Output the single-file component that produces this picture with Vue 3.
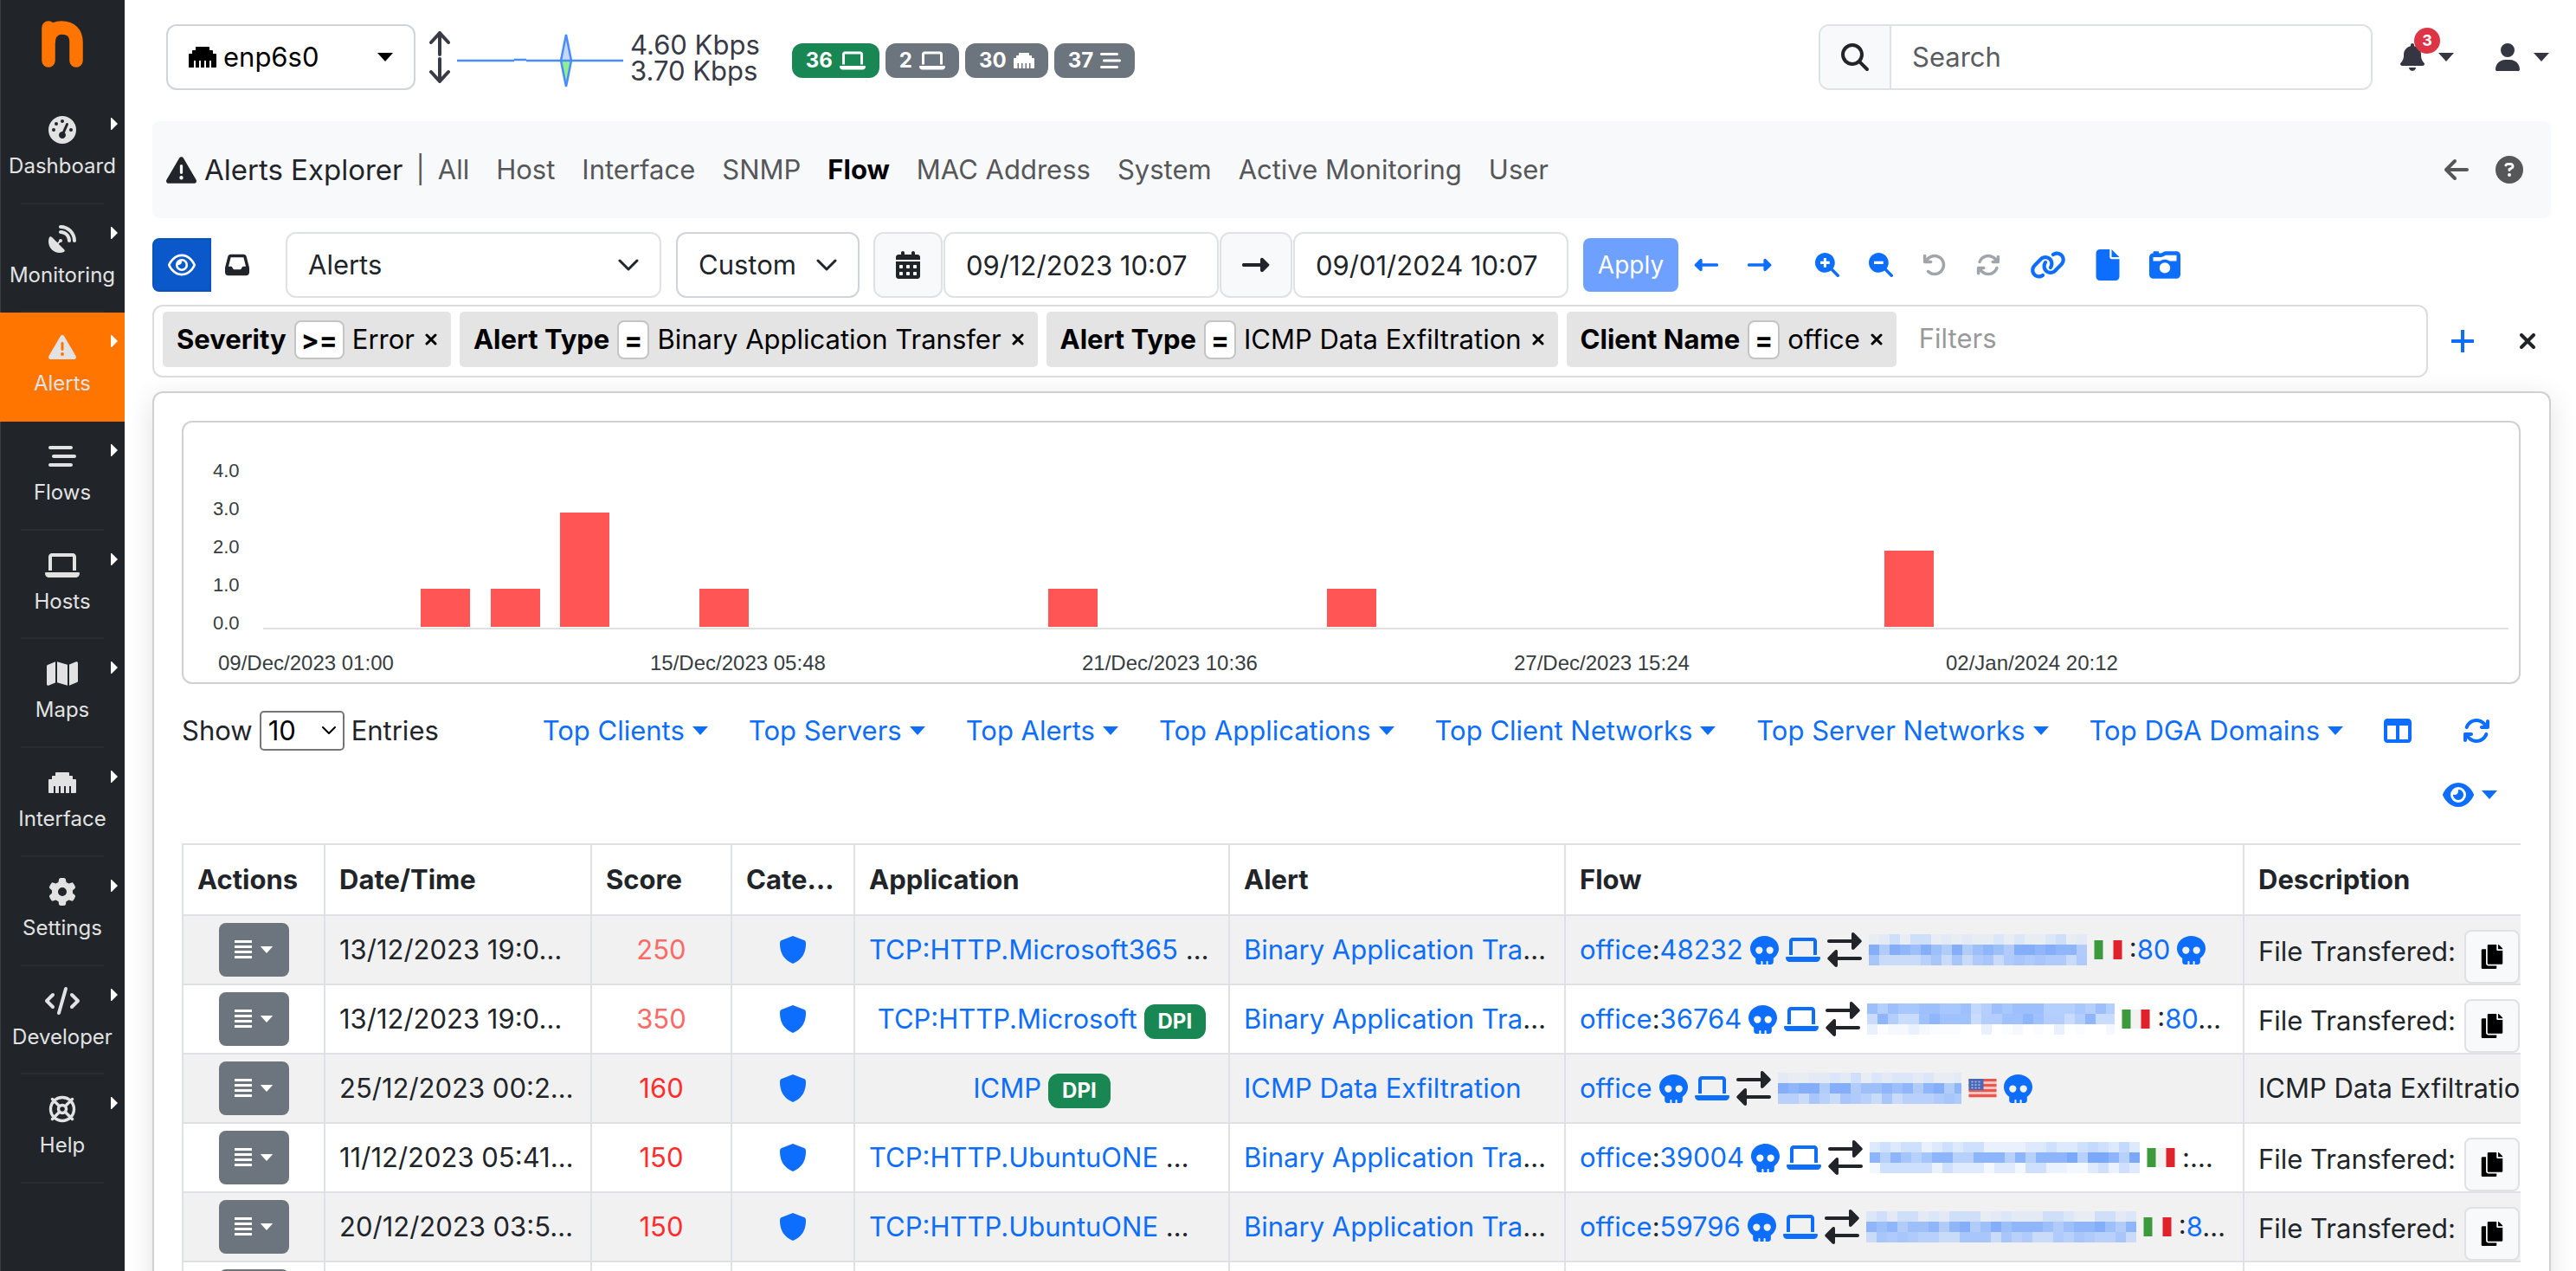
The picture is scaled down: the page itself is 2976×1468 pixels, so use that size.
<script setup>
import { h, ref } from 'vue'

const glyphs = {
  gauge: ['0 0 512 512', 'M0 256a256 256 0 1 1 512 0A256 256 0 1 1 0 256zM288 96a32 32 0 1 0 -64 0 32 32 0 1 0 64 0zM256 416c35.3 0 64-28.7 64-64c0-17.4-6.9-33.1-18.1-44.6L366 161.7c5.3-12.1-.2-26.3-12.3-31.6s-26.3 .2-31.6 12.3L257.9 288c-.6 0-1.3 0-1.9 0c-35.3 0-64 28.7-64 64s28.7 64 64 64zM176 144a32 32 0 1 0 -64 0 32 32 0 1 0 64 0zM96 288a32 32 0 1 0 0-64 32 32 0 1 0 0 64zm352-32a32 32 0 1 0 -64 0 32 32 0 1 0 64 0z'],
  dish: ['0 0 512 512', 'M192 32c0-17.7 14.3-32 32-32C383.1 0 512 128.9 512 288c0 17.7-14.3 32-32 32s-32-14.3-32-32C448 164.3 347.7 64 224 64c-17.7 0-32-14.3-32-32zM60.6 220.6L164.7 324.7l28.4-28.4c-.7-2.6-1.1-5.4-1.1-8.3c0-17.7 14.3-32 32-32s32 14.3 32 32s-14.3 32-32 32c-2.9 0-5.6-.4-8.3-1.1l-28.4 28.4L291.4 451.4c14.5 14.5 11.8 38.8-7.3 46.3C260.5 506.9 234.9 512 208 512C93.1 512 0 418.9 0 304c0-26.9 5.1-52.5 14.4-76.1c7.5-19 31.8-21.8 46.3-7.3zM224 96c106 0 192 86 192 192c0 17.7-14.3 32-32 32s-32-14.3-32-32c0-70.7-57.3-128-128-128c-17.7 0-32-14.3-32-32s14.3-32 32-32z'],
  warning: ['0 0 512 512', 'M256 32c14.2 0 27.3 7.5 34.5 19.8l216 368c7.3 12.4 7.3 27.7 .2 40.1S486.3 480 472 480H40c-14.3 0-27.6-7.7-34.7-20.1s-7-27.8 .2-40.1l216-368C228.7 39.5 241.8 32 256 32zm0 128c-13.3 0-24 10.7-24 24V296c0 13.3 10.7 24 24 24s24-10.7 24-24V184c0-13.3-10.7-24-24-24zm32 224a32 32 0 1 0 -64 0 32 32 0 1 0 64 0z'],
  flows: ['0 0 512 512', 'M0 96C0 78.3 14.3 64 32 64H416c17.7 0 32 14.3 32 32s-14.3 32-32 32H32C14.3 128 0 113.7 0 96zM64 256c0-17.7 14.3-32 32-32H480c17.7 0 32 14.3 32 32s-14.3 32-32 32H96c-17.7 0-32-14.3-32-32zM448 416c0 17.7-14.3 32-32 32H32c-17.7 0-32-14.3-32-32s14.3-32 32-32H416c17.7 0 32 14.3 32 32z'],
  laptop: ['0 0 640 512', 'M128 32C92.7 32 64 60.7 64 96V352h64V96H512V352h64V96c0-35.3-28.7-64-64-64H128zM19.2 384C8.6 384 0 392.6 0 403.2C0 445.6 34.4 480 76.8 480H563.2c42.4 0 76.8-34.4 76.8-76.8c0-10.6-8.6-19.2-19.2-19.2H19.2z'],
  map: ['0 0 576 512', 'M384 476.1L192 421.2V35.9L384 90.8V476.1zm32-1.2V88.4L543.1 37.5c15.8-6.3 32.9 5.3 32.9 22.3V394.6c0 9.8-6 18.6-15.1 22.3L416 474.8zM15.1 95.1L160 37.2V423.6L32.9 474.5C17.1 480.8 0 469.2 0 452.2V117.4c0-9.8 6-18.6 15.1-22.3z'],
  ethernet: ['0 0 512 512', 'M496 192h-48v-48c0-8.8-7.2-16-16-16h-48V80c0-8.8-7.2-16-16-16H144c-8.8 0-16 7.2-16 16v48H80c-8.8 0-16 7.2-16 16v48H16c-8.8 0-16 7.2-16 16v224c0 8.8 7.2 16 16 16h80V320h32v128h64V320h32v128h64V320h32v128h64V320h32v128h80c8.8 0 16-7.2 16-16V208c0-8.8-7.2-16-16-16z'],
  gear: ['0 0 512 512', 'M495.9 166.6c3.2 8.7 .5 18.4-6.4 24.6l-43.3 39.4c1.1 8.3 1.7 16.8 1.7 25.4s-.6 17.1-1.7 25.4l43.3 39.4c6.9 6.2 9.6 15.9 6.4 24.6c-4.4 11.9-9.7 23.3-15.8 34.3l-4.7 8.1c-6.6 11-14 21.4-22.1 31.2c-5.9 7.2-15.7 9.6-24.5 6.8l-55.7-17.7c-13.4 10.3-28.2 18.9-44 25.4l-12.5 57.1c-2 9.1-9 16.3-18.2 17.8c-13.8 2.3-28 3.5-42.5 3.5s-28.7-1.2-42.5-3.5c-9.2-1.5-16.2-8.7-18.2-17.8l-12.5-57.1c-15.8-6.5-30.6-15.1-44-25.4L83.1 425.9c-8.8 2.8-18.6 .3-24.5-6.8c-8.1-9.8-15.5-20.2-22.1-31.2l-4.7-8.1c-6.1-11-11.4-22.4-15.8-34.3c-3.2-8.7-.5-18.4 6.4-24.6l43.3-39.4C64.6 273.1 64 264.6 64 256s.6-17.1 1.7-25.4L22.4 191.2c-6.9-6.2-9.6-15.9-6.4-24.6c4.4-11.9 9.7-23.3 15.8-34.3l4.7-8.1c6.6-11 14-21.4 22.1-31.2c5.9-7.2 15.7-9.6 24.5-6.8l55.7 17.7c13.4-10.3 28.2-18.9 44-25.4l12.5-57.1c2-9.1 9-16.3 18.2-17.8C227.3 1.2 241.5 0 256 0s28.7 1.2 42.5 3.5c9.2 1.5 16.2 8.7 18.2 17.8l12.5 57.1c15.8 6.5 30.6 15.1 44 25.4l55.7-17.7c8.8-2.8 18.6-.3 24.5 6.8c8.1 9.8 15.5 20.2 22.1 31.2l4.7 8.1c6.1 11 11.4 22.4 15.8 34.3zM256 336a80 80 0 1 0 0-160 80 80 0 1 0 0 160z'],
  code: ['0 0 640 512', 'M392.8 1.2c-17-4.9-34.7 5-39.6 22l-128 448c-4.9 17 5 34.7 22 39.6s34.7-5 39.6-22l128-448c4.9-17-5-34.7-22-39.6zm80.6 120.1c-12.5 12.5-12.5 32.8 0 45.3L562.7 256l-89.4 89.4c-12.5 12.5-12.5 32.8 0 45.3s32.8 12.5 45.3 0l112-112c12.5-12.5 12.5-32.8 0-45.3l-112-112c-12.5-12.5-32.8-12.5-45.3 0zm-306.7 0c-12.5-12.5-32.8-12.5-45.3 0l-112 112c-12.5 12.5-12.5 32.8 0 45.3l112 112c12.5 12.5 32.8 12.5 45.3 0s12.5-32.8 0-45.3L77.3 256l89.4-89.4c12.5-12.5 12.5-32.8 0-45.3z'],
  search: ['0 0 512 512', 'M416 208c0 45.9-14.9 88.3-40 122.7L502.6 457.4c12.5 12.5 12.5 32.8 0 45.3s-32.8 12.5-45.3 0L330.7 376c-34.4 25.2-76.8 40-122.7 40C93.1 416 0 322.9 0 208S93.1 0 208 0S416 93.1 416 208zM208 352a144 144 0 1 0 0-288 144 144 0 1 0 0 288z'],
  zoomIn: ['0 0 512 512', 'M416 208c0 45.9-14.9 88.3-40 122.7L506 461c10 10 10 26 0 36l-9 9c-10 10-26 10-36 0L330.7 376c-34.4 25.2-76.8 40-122.7 40C93.1 416 0 322.9 0 208S93.1 0 208 0S416 93.1 416 208zM180 110v70h-70v56h70v70h56v-70h70v-56h-70v-70z'],
  zoomOut: ['0 0 512 512', 'M416 208c0 45.9-14.9 88.3-40 122.7L506 461c10 10 10 26 0 36l-9 9c-10 10-26 10-36 0L330.7 376c-34.4 25.2-76.8 40-122.7 40C93.1 416 0 322.9 0 208S93.1 0 208 0S416 93.1 416 208zM110 180v56h196v-56z'],
  bell: ['0 0 448 512', 'M224 0c-17.7 0-32 14.3-32 32V51.2C119 66 64 130.6 64 208v18.8c0 47-17.3 92.4-48.5 127.6l-7.4 8.3c-8.4 9.4-10.4 22.9-5.3 34.4S19.4 416 32 416H416c12.6 0 24-7.4 29.2-18.9s3.1-25-5.3-34.4l-7.4-8.3C401.3 319.2 384 273.9 384 226.8V208c0-77.4-55-142-128-156.8V32c0-17.7-14.3-32-32-32zm45.3 493.3c12-12 18.7-28.3 18.7-45.3H224 160c0 17 6.7 33.3 18.7 45.3s28.3 18.7 45.3 18.7s33.3-6.7 45.3-18.7z'],
  user: ['0 0 448 512', 'M224 256A128 128 0 1 0 224 0a128 128 0 1 0 0 256zm-45.7 48C79.8 304 0 383.8 0 482.3C0 498.7 13.3 512 29.7 512H418.3c16.4 0 29.7-13.3 29.7-29.7C448 383.8 368.2 304 269.7 304H178.3z'],
  back: ['0 0 448 512', 'M9.4 233.4c-12.5 12.5-12.5 32.8 0 45.3l160 160c12.5 12.5 32.8 12.5 45.3 0s12.5-32.8 0-45.3L109.2 288 416 288c17.7 0 32-14.3 32-32s-14.3-32-32-32l-306.7 0L214.6 118.6c12.5-12.5 12.5-32.8 0-45.3s-32.8-12.5-45.3 0l-160 160z'],
  question: ['0 0 512 512', 'M256 512A256 256 0 1 0 256 0a256 256 0 1 0 0 512zM169.8 165.3c7.9-22.3 29.1-37.3 52.8-37.3h58.3c34.9 0 63.1 28.3 63.1 63.1c0 22.6-12.1 43.5-31.7 54.8L280 264.4c-.2 13-10.9 23.6-24 23.6c-13.3 0-24-10.7-24-24V250.5c0-8.6 4.6-16.5 12.1-20.8l44.3-25.4c4.7-2.7 7.6-7.7 7.6-13.1c0-8.4-6.8-15.1-15.1-15.1H222.6c-3.4 0-6.4 2.1-7.5 5.3l-.4 1.2c-4.4 12.5-18.2 19-30.6 14.6s-19-18.2-14.6-30.6l.4-1.2zM224 352a32 32 0 1 1 64 0 32 32 0 1 1 -64 0z'],
  eye: ['0 0 576 512', 'M288 32c-80.8 0-145.5 36.8-192.6 80.6C48.6 156 17.3 208 2.5 243.7c-3.3 7.9-3.3 16.7 0 24.6C17.3 304 48.6 356 95.4 399.4C142.5 443.2 207.2 480 288 480s145.5-36.8 192.6-80.6c46.8-43.5 78.1-95.4 93-131.1c3.3-7.9 3.3-16.7 0-24.6c-14.9-35.7-46.2-87.7-93-131.1C433.5 68.8 368.8 32 288 32zM144 256a144 144 0 1 1 288 0 144 144 0 1 1 -288 0zm144-64c0 35.3-28.7 64-64 64c-7.1 0-13.9-1.2-20.3-3.3c-5.5-1.8-11.9 1.6-11.7 7.4c.3 6.9 1.3 13.8 3.2 20.7c13.7 51.2 66.4 81.6 117.6 67.9s81.6-66.4 67.9-117.6c-11.1-41.5-47.8-69.4-88.6-71.1c-5.8-.2-9.2 6.1-7.4 11.7c2.1 6.4 3.3 13.2 3.3 20.3z'],
  eyeLine: ['0 0 576 512', 'M288 80c-65.2 0-118.8 29.6-159.9 67.7C89.6 183.5 63 226 49.4 256c13.6 30 40.2 72.5 78.6 108.3C169.2 402.4 222.8 432 288 432s118.8-29.6 159.9-67.7C486.4 328.5 513 286 526.6 256c-13.6-30-40.2-72.5-78.6-108.3C406.8 109.6 353.2 80 288 80zM95.4 112.6C142.5 68.8 207.2 32 288 32s145.5 36.8 192.6 80.6c46.8 43.5 78.1 95.4 93 131.1c3.3 7.9 3.3 16.7 0 24.6c-14.9 35.7-46.2 87.7-93 131.1C433.5 443.2 368.8 480 288 480s-145.5-36.8-192.6-80.6C48.6 356 17.3 304 2.5 268.3c-3.3-7.9-3.3-16.7 0-24.6C17.3 208 48.6 156 95.4 112.6zM288 336c44.2 0 80-35.8 80-80s-35.8-80-80-80c-.7 0-1.3 0-2 0c1.3 5.1 2 10.5 2 16c0 35.3-28.7 64-64 64c-5.5 0-10.9-.7-16-2c0 .7 0 1.3 0 2c0 44.2 35.8 80 80 80zm0-208a128 128 0 1 1 0 256 128 128 0 1 1 0-256z'],
  inbox: ['0 0 512 512', 'M121 32C91.6 32 66 52 58.9 80.5L1.9 308.4C.6 313.5 0 318.7 0 323.9V416c0 35.3 28.7 64 64 64H448c35.3 0 64-28.7 64-64V323.9c0-5.2-.6-10.4-1.9-15.5l-57-227.9C446 52 420.4 32 391 32H121zm0 64H391l48 192H387.8c-12.1 0-23.2 6.8-28.6 17.7l-14.3 28.6c-5.4 10.8-16.5 17.7-28.6 17.7H195.8c-12.1 0-23.2-6.8-28.6-17.7l-14.3-28.6c-5.4-10.8-16.5-17.7-28.6-17.7H73L121 96z'],
  calendar: ['0 0 448 512', 'M128 0c17.7 0 32 14.3 32 32V64H288V32c0-17.7 14.3-32 32-32s32 14.3 32 32V64h48c26.5 0 48 21.5 48 48v48H0V112C0 85.5 21.5 64 48 64H96V32c0-17.7 14.3-32 32-32zM0 192H448V464c0 26.5-21.5 48-48 48H48c-26.5 0-48-21.5-48-48V192zm64 80v32c0 8.8 7.2 16 16 16h32c8.8 0 16-7.2 16-16V272c0-8.8-7.2-16-16-16H80c-8.8 0-16 7.2-16 16zm128 0v32c0 8.8 7.2 16 16 16h32c8.8 0 16-7.2 16-16V272c0-8.8-7.2-16-16-16H208c-8.8 0-16 7.2-16 16zm144-16c-8.8 0-16 7.2-16 16v32c0 8.8 7.2 16 16 16h32c8.8 0 16-7.2 16-16V272c0-8.8-7.2-16-16-16H336zM64 400v32c0 8.8 7.2 16 16 16h32c8.8 0 16-7.2 16-16V400c0-8.8-7.2-16-16-16H80c-8.8 0-16 7.2-16 16zm144-16c-8.8 0-16 7.2-16 16v32c0 8.8 7.2 16 16 16h32c8.8 0 16-7.2 16-16V400c0-8.8-7.2-16-16-16H208zm112 16v32c0 8.8 7.2 16 16 16h32c8.8 0 16-7.2 16-16V400c0-8.8-7.2-16-16-16H336c-8.8 0-16 7.2-16 16z'],
  longRight: ['0 0 32 16', 'M2 6H21V2C21 0 23 -1 24.500 .5L31 7C31.600 7.600 31.600 8.400 31 9L24.500 15.500C23 17 21 16 21 14V10H2C.7 10 0 9.300 0 8.500V7.500C0 6.700 .7 6 2 6Z'],
  longLeft: ['0 0 32 16', 'M30 6H11V2C11 0 9 -1 7.500 .5L1 7C.4 7.600 .4 8.400 1 9L7.500 15.500C9 17 11 16 11 14V10H30C31.300 10 32 9.300 32 8.500V7.500C32 6.700 31.300 6 30 6Z'],
  undo: ['0 0 512 512', 'M125.7 160H176c17.7 0 32 14.3 32 32s-14.3 32-32 32H48c-17.7 0-32-14.3-32-32V64c0-17.7 14.3-32 32-32s32 14.3 32 32v51.2L97.6 97.6c87.5-87.5 229.3-87.5 316.8 0s87.5 229.3 0 316.8s-229.3 87.5-316.8 0c-12.5-12.5-12.5-32.8 0-45.3s32.8-12.5 45.3 0c62.5 62.5 163.8 62.5 226.3 0s62.5-163.8 0-226.3s-163.8-62.5-226.3 0L125.7 160z'],
  refresh: ['0 0 512 512', 'M105.1 202.6c7.7-21.8 20.2-42.3 37.8-59.8c62.5-62.5 163.8-62.5 226.3 0L386.3 160H352c-17.7 0-32 14.3-32 32s14.3 32 32 32H463.5c0 0 0 0 0 0h.4c17.7 0 32-14.3 32-32V80c0-17.7-14.3-32-32-32s-32 14.3-32 32v35.2L414.4 97.6c-87.5-87.5-229.3-87.5-316.8 0C73.2 122 55.6 150.7 44.8 181.4c-5.9 16.7 2.9 34.9 19.5 40.8s34.9-2.9 40.8-19.5zM39 289.3c-5 1.500-9.8 4.200-13.7 8.200c-4 4-6.7 8.800-8.100 14c-.3 1.200-.6 2.500-.8 3.800c-.3 1.700-.4 3.400-.4 5.100V432c0 17.700 14.300 32 32 32s32-14.300 32-32V396.900l17.600 17.500 0 0c87.500 87.400 229.300 87.400 316.700 0c24.400-24.400 42.100-53.100 52.900-83.700c5.900-16.700-2.900-34.900-19.500-40.800s-34.900 2.900-40.800 19.500c-7.700 21.800-20.200 42.300-37.800 59.800c-62.500 62.500-163.800 62.500-226.300 0l-.1-.1L125.600 352H160c17.700 0 32-14.300 32-32s-14.300-32-32-32H48.400c-1.600 0-3.200 .1-4.800 .3s-3.100 .5-4.600 1z'],
  link: ['0 0 640 512', 'M579.8 267.7c56.5-56.5 56.5-148 0-204.5c-50-50-128.8-56.5-186.3-15.4l-1.6 1.1c-14.4 10.3-17.7 30.3-7.4 44.6s30.3 17.7 44.6 7.4l1.6-1.1c32.1-22.9 76-19.3 103.8 8.6c31.5 31.5 31.5 82.5 0 114L422.3 334.8c-31.5 31.5-82.5 31.5-114 0c-27.9-27.9-31.5-71.8-8.6-103.8l1.1-1.6c10.3-14.4 6.9-34.4-7.4-44.6s-34.4-6.9-44.6 7.4l-1.1 1.6C206.5 251.2 213 330 263 380c56.5 56.5 148 56.5 204.5 0L579.8 267.7zM60.2 244.3c-56.5 56.5-56.5 148 0 204.5c50 50 128.8 56.5 186.3 15.4l1.6-1.1c14.4-10.3 17.7-30.3 7.4-44.6s-30.3-17.7-44.6-7.4l-1.6 1.1c-32.1 22.9-76 19.3-103.8-8.6C74 372 74 321 105.5 289.5L217.7 177.2c31.5-31.5 82.5-31.5 114 0c27.9 27.9 31.5 71.8 8.6 103.9l-1.1 1.6c-10.3 14.4-6.9 34.4 7.4 44.6s34.4 6.9 44.6-7.4l1.1-1.6C433.5 260.8 427 182 377 132c-56.5-56.5-148-56.5-204.5 0L60.2 244.3z'],
  file: ['0 0 384 512', 'M0 64C0 28.7 28.7 0 64 0H224V128c0 17.7 14.3 32 32 32H384V448c0 35.3-28.7 64-64 64H64c-35.3 0-64-28.7-64-64V64zm384 64H256V0L384 128z'],
  camera: ['0 0 512 512', 'M220.6 121.2L271.1 96 448 96v96H333.2c-21.9-15.1-48.5-24-77.2-24s-55.2 8.9-77.2 24H64V128H192c9.900 0 19.700-2.300 28.600-6.800zM0 128V416c0 35.300 28.700 64 64 64H448c35.300 0 64-28.700 64-64V96c0-35.300-28.700-64-64-64H271.100c-9.900 0-19.700 2.300-28.600 6.800L192 64H160V48c0-8.800-7.200-16-16-16H80c-8.800 0-16 7.200-16 16l0 16C28.700 64 0 92.700 0 128zM344 304a88 88 0 1 1 -176 0 88 88 0 1 1 176 0z'],
  columns: ['0 0 512 512', 'M0 96C0 60.7 28.7 32 64 32H448c35.3 0 64 28.7 64 64V416c0 35.3-28.7 64-64 64H64c-35.3 0-64-28.7-64-64V96zm64 64V416H224V160H64zm384 0H288V416H448V160z'],
  skull: ['0 0 512 512', 'M416 398.9c58.5-41.1 96-104.1 96-174.9C512 100.3 397.4 0 256 0S0 100.3 0 224c0 70.7 37.5 133.8 96 174.9c0 .4 0 .7 0 1.1v64c0 26.5 21.5 48 48 48h48V464c0-8.8 7.2-16 16-16s16 7.2 16 16v48h64V464c0-8.8 7.2-16 16-16s16 7.2 16 16v48h48c26.5 0 48-21.5 48-48V400c0-.4 0-.7 0-1.1zM96 256a64 64 0 1 1 128 0A64 64 0 1 1 96 256zm256-64a64 64 0 1 1 0 128 64 64 0 1 1 0-128z'],
  exchange: ['0 0 40 40', 'M2 8H28V2C28 0 30 -.5 31.300 .8L39.200 8.700C40 9.500 40 10.500 39.200 11.300L31.300 19.200C30 20.500 28 20 28 18V12H2C.8 12 0 11.200 0 10S.8 8 2 8ZM38 28H12V22C12 20 10 19.500 8.700 20.800L.8 28.700C0 29.500 0 30.500 .8 31.300L8.700 39.200C10 40.500 12 40 12 38V32H38C39.200 32 40 31.200 40 30S39.200 28 38 28Z'],
  shield: ['0 0 30 32', 'M15 0L28 5C29.500 5.600 30 7 30 9C30 20 25 28 15 32C5 28 0 20 0 9C0 7 .5 5.600 2 5Z'],
  copy: ['0 0 448 512', 'M320 448v40c0 13.255-10.745 24-24 24H24c-13.255 0-24-10.745-24-24V120c0-13.255 10.745-24 24-24h72v296c0 30.879 25.121 56 56 56h168zm0-344V0H152c-13.255 0-24 10.745-24 24v368c0 13.255 10.745 24 24 24h272c13.255 0 24-10.745 24-24V128H344c-13.200 0-24-10.800-24-24zm120.971-31.029L375.029 7.029A24 24 0 0 0 358.059 0H352v96h96v-6.059a24 24 0 0 0-7.029-16.970z'],
  lines: ['0 0 22 22', 'M1 0H21V3H1ZM1 6H21V9H1ZM1 12H21V15H1ZM1 18H21V21H1Z'],
  caret: ['0 0 18 10', 'M0 0H18L9 10Z'],
  play: ['0 0 8 14', 'M0 0L1 0L8 7L1 14H0Z']
}
const strokes = {
  ring: ['0 0 32 32', 'M16 2.500a13.500 13.500 0 1 1 0 27a13.500 13.500 0 1 1 0-27zM16 11.500a4.500 4.500 0 1 1 0 9a4.500 4.500 0 1 1 0-9zM4.500 4.500L12 12M27.500 4.500L20 12M4.500 27.500L12 20M27.500 27.500L20 20', 3.4],
  chevron: ['0 0 24 14', 'M2 2L12 12L22 2', 3],
  thinChevron: ['0 0 16 10', 'M1 1L8 8L15 1', 2],
  updown: ['0 0 26 60', 'M13 2V27M3 13L13 2L23 13M13 32V58M3 47L13 58L23 47', 4],
  plus: ['0 0 26 26', 'M13 1V25M1 13H25', 4],
  times: ['0 0 18 18', 'M2 2L16 16M16 2L2 16', 4],
  cross: ['0 0 14 14', 'M2 2L12 12M12 2L2 12', 3]
}
const Icon = ({ name }) => {
  const line = strokes[name]
  const [viewBox, d, w] = line || glyphs[name]
  return h('svg', { viewBox, 'aria-hidden': 'true' }, [
    h('path', line
      ? { d, fill: 'none', stroke: 'currentColor', 'stroke-width': w, 'stroke-linecap': 'round', 'stroke-linejoin': 'round' }
      : { d, fill: 'currentColor', 'fill-rule': 'evenodd' })
  ])
}
Icon.props = ['name']

const menu = [
  ['Dashboard', 'gauge'], ['Monitoring', 'dish'], ['Alerts', 'warning'], ['Flows', 'flows'], ['Hosts', 'laptop'],
  ['Maps', 'map'], ['Interface', 'ethernet'], ['Settings', 'gear'], ['Developer', 'code'], ['Help', 'ring']
]
const counters = [['36', 'laptop', true], ['2', 'laptop'], ['30', 'ethernet'], ['37', 'flows']]
const tabs = ['All', 'Host', 'Interface', 'SNMP', 'Flow', 'MAC Address', 'System', 'Active Monitoring', 'User']
const filters = [
  ['Severity', '>=', 'Error'],
  ['Alert Type', '=', 'Binary Application Transfer'],
  ['Alert Type', '=', 'ICMP Data Exfiltration'],
  ['Client Name', '=', 'office']
]
const tops = ['Top Clients', 'Top Servers', 'Top Alerts', 'Top Applications', 'Top Client Networks', 'Top Server Networks', 'Top DGA Domains']

const from = ref('09/12/2023 10:07')
const to = ref('09/01/2024 10:07')

const ticks = [0, 1, 2, 3, 4]
const dates = ['09/Dec/2023 01:00', '15/Dec/2023 05:48', '21/Dec/2023 10:36', '27/Dec/2023 15:24', '02/Jan/2024 20:12']
const bars = [[0, 1], [1, 1], [2, 3], [4, 1], [9, 1], [13, 1], [21, 2]].map(([slot, n]) => ({
  x: Math.round(274 + slot * 80.5), height: n * 44
}))

const tints = {
  mid: [['#e3eaf5', '#dbe6f8', '#cfdff9', '#e8edf4'], ['#8fb6fb', '#9dbffa', '#84aefa', '#b2ccfa'], ['#b9d0fa', '#a9c6fa', '#c9dbf9', '#b0cbfb']],
  low: [['#b4cffd', '#a8c8fd', '#c3d8fe', '#9dc0fd'], ['#9fc2fe', '#b3cefe', '#8fb6fb', '#c9dcfe'], ['#f5f9ff', '#ffffff', '#e9f1ff', '#fafcff']],
  wide: [['#dce9fe', '#c4d9fe', '#e9f1ff', '#cfe0fe'], ['#8cb5fd', '#7aa9fc', '#a5c5fd', '#b7d1fe'], ['#dfeafe', '#ebf2ff', '#cfe0fe', '#f3f8ff']]
}
const mosaic = (width, kind, seed) => {
  const cells = []
  let s = seed
  tints[kind].forEach((row, r) => {
    for (let x = 0; x < width; x += 12) {
      s = (s * 1103 + 12345) % 65537
      cells.push({ x, y: r * 12, w: Math.min(12, width - x), fill: row[s % 4] })
    }
  })
  return cells
}
const rows = [
  { time: '13/12/2023 19:0…', score: 250, soft: true, app: 'TCP:HTTP.Microsoft365', cut: true, alert: 'Binary Application Tra', port: '48232', w: 252, kind: 'mid', flag: 'it', dest: '80', tail: '', endSkull: true },
  { time: '13/12/2023 19:0…', score: 350, soft: true, app: 'TCP:HTTP.Microsoft', dpi: true, alert: 'Binary Application Tra', port: '36764', w: 286, kind: 'low', flag: 'it', dest: '80', tail: '…' },
  { time: '25/12/2023 00:2…', score: 160, app: 'ICMP', dpi: true, alert: 'ICMP Data Exfiltration', w: 212, kind: 'mid', flag: 'us', endSkull: true, desc: 'ICMP Data Exfiltration' },
  { time: '11/12/2023 05:41…', score: 150, app: 'TCP:HTTP.UbuntuONE', cut: true, alert: 'Binary Application Tra', port: '39004', w: 312, kind: 'wide', flag: 'it', dest: '', tail: '…' },
  { time: '20/12/2023 03:5…', score: 150, app: 'TCP:HTTP.UbuntuONE', cut: true, alert: 'Binary Application Tra', port: '59796', w: 312, kind: 'mid', flag: 'it', dest: '8', tail: '…' },
  { time: '20/12/2023 03:5…', score: 150, app: 'TCP:HTTP.UbuntuONE', cut: true, alert: 'Binary Application Tra', port: '59798', w: 312, kind: 'wide', flag: 'it', dest: '8', tail: '…' }
].map((r, i) => ({ ...r, cells: mosaic(r.w, r.kind, 77 + i * 31) }))
</script>

<template>
  <div class="app">
    <nav class="side" aria-label="Main">
      <a href="#" class="logo" aria-label="Home">
        <svg viewBox="0 0 48 54"><path d="M8 46V8M8 27C8 14 14 8 23 8C34 8 40 14 40 25V46" fill="none" stroke="#ff7500" stroke-width="15.5" stroke-linecap="round" /></svg>
      </a>
      <ul class="menu">
        <li v-for="[label, icon] in menu" :key="label">
          <a href="#" :class="['item', { active: label === 'Alerts' }]">
            <Icon :name="icon" class="item-icon" />
            <span>{{ label }}</span>
            <Icon name="play" class="item-arrow" />
          </a>
        </li>
      </ul>
    </nav>

    <main class="main">
      <header class="top">
        <div class="field iface">
          <Icon name="ethernet" class="i32" />
          <select aria-label="Interface"><option>enp6s0</option></select>
          <Icon name="caret" class="caret" />
        </div>
        <Icon name="updown" class="updown" />
        <div class="status">
          <svg class="spark" viewBox="0 0 192 64">
            <path d="M120 33L126 2L132 33Z" fill="#c6d9fd" />
            <path d="M120 33L126 62L132 33Z" fill="#90ee90" />
            <path d="M0 32H66M66 31H80M80 32H192M120 32L126 2L132 32L126 62Z" fill="none" stroke="#4a8cff" stroke-width="2.500" />
          </svg>
          <div class="rates"><span>4.60 Kbps</span><span>3.70 Kbps</span></div>
          <div class="counters">
            <a v-for="([n, icon, on]) in counters" :key="n" href="#" :class="['pill', { green: on }]">{{ n }}<Icon :name="icon" class="pill-icon" /></a>
          </div>
        </div>
        <form class="search" @submit.prevent>
          <button type="submit" aria-label="Search"><Icon name="search" class="i32" /></button>
          <input type="search" placeholder="Search" aria-label="Search">
        </form>
        <button class="plain bell" aria-label="Notifications">
          <Icon name="bell" class="i28" /><Icon name="caret" class="caret" /><span class="count">3</span>
        </button>
        <button class="plain user" aria-label="User"><Icon name="user" class="i28" /><Icon name="caret" class="caret" /></button>
      </header>

      <div class="crumbs">
        <Icon name="warning" class="crumb-icon" />
        <h1>Alerts Explorer</h1>
        <span class="bar">|</span>
        <a v-for="t in tabs" :key="t" href="#" :class="{ current: t === 'Flow' }">{{ t }}</a>
        <button class="plain go-back" aria-label="Back"><Icon name="back" class="i28" /></button>
        <button class="plain" aria-label="Help"><Icon name="question" class="i32" /></button>
      </div>

      <div class="tools">
        <button class="look" aria-label="Active alerts"><Icon name="eyeLine" class="i32" /></button>
        <button class="plain boxed" aria-label="Inbox"><Icon name="inbox" class="i28" /></button>
        <div class="field kind">
          <select aria-label="Query"><option>Alerts</option></select>
          <Icon name="chevron" class="chev" />
        </div>
        <div class="field range">
          <select aria-label="Range"><option>Custom</option></select>
          <Icon name="chevron" class="chev" />
        </div>
        <div class="dates">
          <span class="field addon"><Icon name="calendar" class="i28" /></span>
          <input v-model="from" class="field" type="text" aria-label="From">
          <span class="field addon"><Icon name="longRight" class="i32" /></span>
          <input v-model="to" class="field" type="text" aria-label="To">
        </div>
        <button class="apply">Apply</button>
        <div class="acts">
          <button class="plain" aria-label="Previous"><Icon name="longLeft" class="i28" /></button>
          <button class="plain" aria-label="Next"><Icon name="longRight" class="i28" /></button>
          <button class="plain first" aria-label="Zoom in"><Icon name="zoomIn" class="i28" /></button>
          <button class="plain" aria-label="Zoom out"><Icon name="zoomOut" class="i28" /></button>
          <button class="plain off" aria-label="Undo"><Icon name="undo" class="i28" /></button>
          <button class="plain off" aria-label="Reload"><Icon name="refresh" class="i28" /></button>
          <button class="plain" aria-label="Copy link"><Icon name="link" class="i42" /></button>
          <button class="plain" aria-label="Download"><Icon name="file" class="file" /></button>
          <button class="plain" aria-label="Snapshot"><Icon name="camera" class="i36" /></button>
        </div>
      </div>

      <div class="filters">
        <div class="tags">
          <span v-for="([k, op, v], i) in filters" :key="i" class="tag">
            <b>{{ k }}</b><b class="op">{{ op }}</b><span>{{ v }}</span>
            <button class="plain drop" :aria-label="'Remove ' + k"><Icon name="cross" class="cross" /></button>
          </span>
          <input type="text" placeholder="Filters" aria-label="Filters">
        </div>
        <button class="plain add" aria-label="Add filter"><Icon name="plus" class="plus" /></button>
        <button class="plain" aria-label="Clear filters"><Icon name="times" class="times" /></button>
      </div>

      <section class="card">
        <div class="chart">
          <svg viewBox="0 0 2698 300" role="img" aria-label="Alerts over time">
            <text v-for="t in ticks" :key="t" x="34" :y="239 - t * 44" font-size="22">{{ t }}.0</text>
            <rect x="92" y="237" width="2594" height="2" fill="#e0e0e0" />
            <rect v-for="b in bars" :key="b.x" :x="b.x" :y="236 - b.height" width="57" :height="b.height" fill="#ff5555" />
            <text v-for="(d, i) in dates" :key="d" :x="40 + i * 499" y="286" font-size="24">{{ d }}</text>
          </svg>
        </div>

        <div class="controls">
          <label class="show">Show
            <span class="entries"><select><option>10</option></select><Icon name="thinChevron" class="thin" /></span>
            Entries</label>
          <div class="tops">
            <button v-for="t in tops" :key="t" class="plain top-link">{{ t }}<Icon name="caret" class="caret" /></button>
            <button class="plain" aria-label="Columns"><Icon name="columns" class="i32" /></button>
            <button class="plain reload" aria-label="Refresh"><Icon name="refresh" class="i32" /></button>
          </div>
          <div class="second">
            <button class="plain top-link" aria-label="Visibility"><Icon name="eye" class="i36" /><Icon name="caret" class="caret" /></button>
          </div>
        </div>

        <div class="scroll">
          <table>
            <colgroup>
              <col class="c1"><col class="c2"><col class="c3"><col class="c4"><col class="c5"><col class="c6"><col class="c7"><col>
            </colgroup>
            <thead>
              <tr><th>Actions</th><th>Date/Time</th><th>Score</th><th>Cate…</th><th>Application</th><th>Alert</th><th>Flow</th><th>Description</th></tr>
            </thead>
            <tbody>
              <tr v-for="(r, i) in rows" :key="i">
                <td class="mid"><button class="act" aria-label="Actions"><Icon name="lines" class="lines" /><Icon name="caret" class="caret small" /></button></td>
                <td>{{ r.time }}</td>
                <td :class="['mid', 'score', { soft: r.soft }]">{{ r.score }}</td>
                <td class="mid"><Icon name="shield" class="shield" /></td>
                <td :class="{ mid: r.dpi }"><a href="#">{{ r.app }}</a><template v-if="r.cut"> …</template><span v-if="r.dpi" class="pill green dpi">DPI</span></td>
                <td><a href="#">{{ r.alert }}</a><template v-if="r.port">…</template></td>
                <td>
                  <div class="flow">
                    <span><a href="#">office</a><template v-if="r.port">:<a href="#">{{ r.port }}</a></template></span>
                    <Icon name="skull" class="skull" />
                    <Icon name="laptop" class="host" />
                    <Icon name="exchange" class="exchange" />
                    <svg :width="r.w" height="36" aria-hidden="true">
                      <rect v-for="(c, j) in r.cells" :key="j" :x="c.x" :y="c.y" :width="c.w" height="12" :fill="c.fill" />
                    </svg>
                    <svg v-if="r.flag === 'it'" class="flag" viewBox="0 0 32 22" aria-label="Italy">
                      <rect width="32" height="22" fill="#f2f2f2" /><rect width="10" height="22" fill="#3c9a3c" /><rect x="22" width="10" height="22" fill="#e0222a" />
                    </svg>
                    <svg v-else class="flag" viewBox="0 0 32 22" aria-label="United States">
                      <rect width="32" height="22" fill="#f3c3bd" />
                      <path d="M0 1.500H32M0 7.500H32M0 13.500H32M0 19.500H32" stroke="#e8574f" stroke-width="3" />
                      <rect width="17" height="13" fill="#4a68b8" />
                      <path d="M3 3.500H15M3 7H15M3 10.500H15" stroke="#b9c6ea" stroke-width="1.500" stroke-dasharray="2 2" />
                    </svg>
                    <span v-if="r.port">:<a v-if="r.dest" href="#">{{ r.dest }}</a>{{ r.tail }}</span>
                    <Icon v-if="r.endSkull" name="skull" class="skull" />
                  </div>
                </td>
                <td>
                  <span v-if="r.desc">{{ r.desc }}</span>
                  <div v-else class="desc"><span>File Transfered:</span><button class="copy" aria-label="Copy"><Icon name="copy" class="copy-icon" /></button></div>
                </td>
              </tr>
            </tbody>
          </table>
        </div>
      </section>
    </main>
  </div>
</template>

<style>
body { background: #fff; }
</style>

<style scoped>
* { box-sizing: border-box; }
.app {
  display: flex;
  height: 100vh;
  overflow: hidden;
  font: 400 31px/46px Inter, "Liberation Sans", sans-serif;
  color: #212529;
}
button, input, select { font: inherit; color: inherit; }
input, select { appearance: none; border: 0; background: none; outline: 0; min-width: 0; padding: 0; }
input::-webkit-search-cancel-button { display: none; }
a { color: #0d6efd; text-decoration: none; }
svg { display: block; flex: none; }
.plain { border: 0; background: none; padding: 0; display: flex; align-items: center; }
.i28 { width: 28px; height: 32px; }
.i32 { width: 32px; height: 32px; }
.i36 { width: 36px; height: 36px; }
.i42 { width: 42px; height: 36px; }
.file { width: 28px; height: 36px; }
.caret { width: 18px; height: 10px; }

.side { flex: none; width: 144px; background: #212529; box-shadow: inset 1px 0 0 #3a3e42; }
.logo { display: block; padding-top: 24px; height: 110px; }
.logo svg { width: 48px; height: 54px; margin: 0 auto; }
.menu { list-style: none; margin: 0; padding: 0; height: 1257px; display: grid; grid-auto-rows: 1fr; }
.menu li { display: grid; }
.item {
  position: relative;
  display: flex;
  flex-direction: column;
  align-items: center;
  gap: 8px;
  padding-top: 24px;
  font-size: 24px;
  line-height: 36px;
  color: #e2e2e2;
}
.item.active { background: #ff7500; }
.item::after { content: ""; position: absolute; left: 24px; right: 24px; bottom: 0; height: 2px; background: #2a2d30; }
.item.active::after { display: none; }
.item-icon { height: 32px; width: 40px; }
.item-arrow { position: absolute; right: 8px; top: 26px; width: 8px; height: 14px; color: #fff; }

.main { flex: 1; min-width: 0; padding: 0 29px 0 32px; }
.top { display: flex; align-items: center; height: 132px; padding: 0 2px 0 16px; margin-bottom: 8px; }
.field { display: flex; align-items: center; height: 76px; border: 2px solid #dee2e6; border-radius: 12px; background: #fff; padding: 0 24px; }
.iface { width: 288px; border-color: #ced4da; gap: 8px; color: #000; }
.iface select { flex: 1; }
.updown { width: 26px; height: 60px; margin-left: 15px; color: #383a45; }
.status { display: flex; align-items: center; padding-top: 8px; }
.spark { width: 192px; height: 64px; margin-left: 7px; }
.rates { display: flex; flex-direction: column; margin: -6px 0 0 8px; line-height: 30px; color: #383a45; }
.counters { display: flex; gap: 7px; margin-left: 37px; }
.pill {
  display: inline-flex;
  align-items: center;
  gap: 8px;
  height: 40px;
  padding: 0 16px;
  border-radius: 12px;
  background: #6c757d;
  color: #fff;
  font-size: 24px;
  line-height: 40px;
  font-weight: 700;
}
.pill.green { background: #198754; }
.pill-icon { height: 24px; width: auto; }
.dpi { margin-left: 8px; }
.search { display: flex; margin-left: auto; width: 640px; height: 76px; border: 2px solid #dee2e6; border-radius: 12px; overflow: hidden; }
.search button { display: flex; align-items: center; border: 0; border-right: 2px solid #dee2e6; background: #f8f9fa; padding: 0 24px; }
.search input { flex: 1; padding: 0 24px; }
.search input::placeholder { color: #5a5d60; opacity: 1; }
.bell, .user { color: #343642; gap: 16px; }
.bell { position: relative; margin-left: 32px; }
.user { margin-left: 48px; }
.count {
  position: absolute;
  left: 16px;
  top: -18px;
  width: 30px;
  height: 30px;
  border-radius: 15px;
  background: #dc3545;
  color: #fff;
  font-size: 18px;
  line-height: 30px;
  font-weight: 700;
}

.crumbs { display: flex; align-items: center; gap: 31px; height: 112px; padding: 0 32px 0 16px; border-radius: 8px; background: #f8f9fb; }
.crumbs a { color: #555759; }
.crumbs a.current { color: #000; font-weight: 700; }
.crumb-icon { width: 35px; height: 35px; margin-right: -22px; }
.crumbs h1 { font-size: 33px; line-height: 46px; font-weight: 400; margin: 0 -16px 0 0; }
.bar { color: #555759; margin-right: -16px; }
.crumbs .plain { color: #555759; }
.crumbs .go-back { margin-left: auto; }

.tools { display: flex; align-items: center; height: 76px; margin-top: 16px; }
.look { width: 68px; height: 62px; display: grid; place-items: center; border: 2px solid #0a53be; border-radius: 8px 0 0 8px; background: #0a58ca; color: #fff; padding: 0; }
.boxed { margin: 0 42px 0 16px; }
.kind { width: 434px; }
.range { width: 212px; margin-left: 17px; border-color: #ced4da; }
.kind select, .range select { flex: 1; }
.chev { width: 24px; height: 14px; }
.dates { display: flex; gap: 1px; margin-left: 16px; }
.dates input { width: 318px; }
.addon { background: #f8f9fa; }
.apply { width: 110px; height: 62px; margin-left: 17px; border: 0; border-radius: 8px; background: #6ea0ff; color: #fff; font-size: 28px; line-height: 42px; padding: 0; }
.acts { display: flex; gap: 34px; margin-left: 18px; }
.acts .plain { color: #0d6efd; }
.acts .first { margin-left: 16px; }
.acts .off { color: #a0a5a9; }

.filters { display: flex; align-items: center; margin-top: 8px; color: #000; }
.tags { flex: 1; display: flex; align-items: flex-start; gap: 10px; height: 84px; padding: 6px 10px; border: 2px solid #dcdcdc; border-radius: 12px; }
.tag { display: flex; align-items: center; height: 64px; padding: 0 16px; border-radius: 5px; background: #e4e4e4; white-space: nowrap; }
.op { height: 45px; line-height: 41px; margin: 0 9px; padding: 0 6px; border: 2px solid #c4c4c4; border-radius: 8px; background: #fff; }
.drop { margin-left: 12px; }
.cross { width: 14px; height: 14px; }
.tags input { flex: 1; height: 60px; padding-left: 16px; }
.tags input::placeholder { color: #999; opacity: 1; }
.add { margin: 0 53px 0 27px; color: #0d6efd; }
.plus { width: 26px; height: 26px; }
.times { width: 18px; height: 18px; margin-right: 18px; color: #212529; }

.card { margin-top: 16px; padding: 32px 33px 0 32px; border: 2px solid #d0d0d0; border-bottom: 0; border-radius: 12px 12px 0 0; box-shadow: 0 8px 32px rgba(0, 0, 0, .12); }
.chart { border: 2px solid #d0d0d0; border-radius: 12px; }
.chart svg { width: 100%; height: auto; }
.chart text { font-family: "Liberation Sans", Arial, sans-serif; fill: #373d3f; }

.controls { display: flex; flex-wrap: wrap; align-items: center; justify-content: space-between; padding: 18px 27px 18px 0; }
.show { display: flex; align-items: center; gap: 8px; height: 72px; }
.entries { display: flex; align-items: center; width: 98px; height: 46px; padding: 0 8px; border: 2px solid #767676; border-radius: 5px; color: #000; }
.entries select { flex: 1; }
.thin { width: 16px; height: 10px; }
.tops { display: flex; align-items: center; gap: 47px; padding-right: 8px; }
.top-link { gap: 9px; }
.controls .plain { color: #0d6efd; }
.reload { margin-left: 12px; }
.second { flex: 0 0 100%; display: flex; justify-content: flex-end; height: 76px; }

.scroll { overflow: hidden; }
table { width: calc(100% + 120px); table-layout: fixed; border-collapse: separate; border-spacing: 0; border: solid #dee2e6; border-width: 2px 0 0 2px; }
.c1 { width: 164px; } .c2 { width: 308px; } .c3 { width: 162px; } .c4 { width: 142px; } .c5 { width: 433px; } .c6 { width: 388px; } .c7 { width: 784px; }
th, td { border: solid #dee2e6; border-width: 0 2px 2px 0; padding: 0 16px; text-align: left; white-space: nowrap; overflow: hidden; }
th { height: 82px; font-weight: 700; }
td { height: 80px; }
tbody tr:nth-child(odd) td { background: #f1f1f1; }
td.mid { text-align: center; }
.score { color: #ff2e2e; }
.score.soft { color: #fa6b66; }
.act { display: flex; align-items: center; justify-content: center; gap: 8px; width: 81px; height: 62px; margin: 0 auto; border: 0; border-radius: 8px; background: #6c757d; color: #fff; padding: 0; }
.lines { width: 22px; height: 22px; }
.small { width: 16px; height: 8px; }
.shield { width: 30px; height: 32px; margin: 0 auto; color: #0d6efd; }
.flow { display: flex; align-items: center; gap: 8px; }
.skull { width: 33px; height: 33px; color: #0d6efd; }
.host { width: 40px; height: 32px; color: #0d6efd; }
.exchange { width: 40px; height: 40px; }
.flag { width: 33px; height: 22px; }
.desc { display: flex; align-items: center; gap: 10px; height: 78px; padding-top: 4px; }
.copy { display: grid; place-items: center; width: 64px; height: 62px; margin-top: 12px; border: 2px solid #dee2e6; border-radius: 8px; background: #f8f9fa; color: #000; padding: 0; }
.copy-icon { width: 28px; height: 28px; }
</style>
